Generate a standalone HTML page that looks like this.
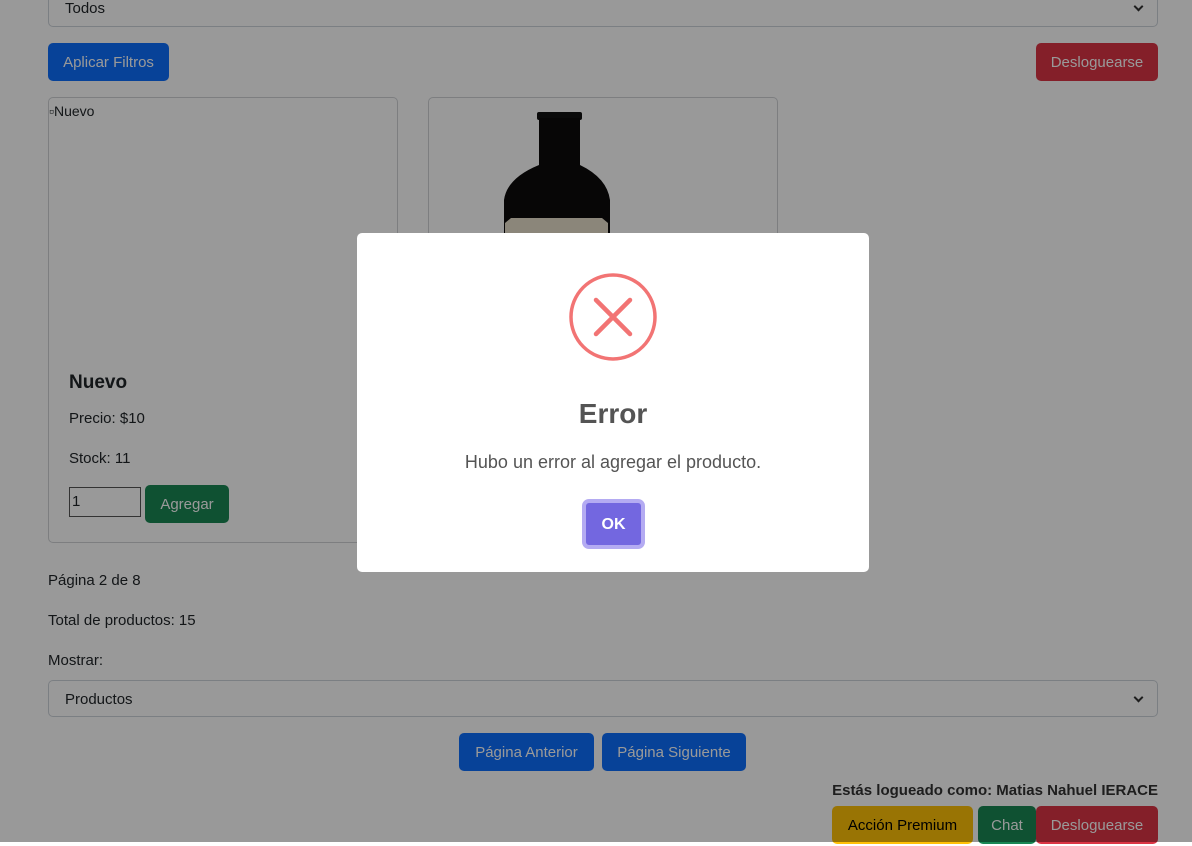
<!DOCTYPE html>
<html><head><meta charset="utf-8"><style>
*{box-sizing:border-box}
body{margin:0;width:1192px;height:842px;overflow:hidden;background:#fff;font-family:"Liberation Sans",sans-serif;font-size:15px;color:#212529;position:relative}
.sel{position:absolute;left:48px;width:1110px;height:38px;border:1px solid #ced4da;border-radius:5px;padding:10px 16px;font-size:15px;color:#212529}
.sel:after{content:"";position:absolute;right:15px;top:13px;width:5px;height:5px;border-right:2px solid #333;border-bottom:2px solid #333;transform:rotate(45deg)}
.btn{position:absolute;height:38px;border-radius:5px;color:#fff;font-size:15px;line-height:40px;text-align:center}
.blue{background:#0d6efd}.red{background:#dc3545}.green{background:#198754}.yellow{background:#ffc107;color:#000}
.card{position:absolute;top:97px;width:350px;height:446px;border:1px solid #d0d3d6;border-radius:5px}
.t{position:absolute}
.ov{position:absolute;inset:0;background:rgba(0,0,0,.4)}
.modal{position:absolute;left:357px;top:233px;width:512px;height:339px;background:#fff;border-radius:5px;text-align:center}
</style></head><body>
<div class="sel" style="top:-11px">Todos</div>
<div class="btn blue" style="left:48px;top:43px;width:121px">Aplicar Filtros</div>
<div class="btn red" style="left:1036px;top:43px;width:122px">Desloguearse</div>
<div class="card" style="left:48px">
 <div class="t" style="left:0;top:5px;font-size:14px">▫Nuevo</div>
 <div class="t" style="left:20px;top:274px;font-size:19px;font-weight:bold">Nuevo</div>
 <div class="t" style="left:20px;top:312px">Precio: $10</div>
 <div class="t" style="left:20px;top:352px">Stock: 11</div>
 <div class="t" style="left:20px;top:389px;width:72px;height:30px;border:1px solid #555;padding:5px 2px">1</div>
 <div class="btn green" style="left:96px;top:387px;width:84px">Agregar</div>
</div>
<div class="card" style="left:428px">
 <svg class="t" style="left:70px;top:12px" width="115" height="130" viewBox="0 0 115 130">
  <rect x="38" y="2" width="45" height="8" rx="2" fill="#111"/>
  <path d="M40 8 H81 V55 Q108 68 111 90 V130 H5 V90 Q8 68 40 55 Z" fill="#0c0a0a"/>
  <path d="M6 113 L12 108 H103 L109 113 V130 H6Z" fill="#e8e0cc"/>
 </svg>
</div>
<div class="t" style="left:48px;top:572px">Página 2 de 8</div>
<div class="t" style="left:48px;top:612px">Total de productos: 15</div>
<div class="t" style="left:48px;top:652px">Mostrar:</div>
<div class="sel" style="top:680px;height:37px">Productos</div>
<div class="btn blue" style="left:459px;top:733px;width:135px">Página Anterior</div>
<div class="btn blue" style="left:602px;top:733px;width:144px">Página Siguiente</div>
<div class="t" style="right:34px;top:782px;font-weight:bold;color:#333">Estás logueado como: Matias Nahuel IERACE</div>
<div class="btn yellow" style="left:832px;top:806px;width:141px">Acción Premium</div>
<div class="btn green" style="left:978px;top:806px;width:58px">Chat</div>
<div class="btn red" style="left:1036px;top:806px;width:122px">Desloguearse</div>
<div class="ov"></div>
<div class="modal">
 <svg class="t" style="left:212px;top:40px" width="88" height="88" viewBox="0 0 88 88">
  <circle cx="44" cy="44" r="42" fill="none" stroke="#f27474" stroke-width="3.5"/>
  <path d="M27 27 L61 61 M61 27 L27 61" stroke="#f27474" stroke-width="4.5" stroke-linecap="round"/>
 </svg>
 <div class="t" style="left:0;width:512px;top:165px;font-size:28px;font-weight:bold;color:#545454">Error</div>
 <div class="t" style="left:0;width:512px;top:219px;font-size:18px;color:#545454">Hubo un error al agregar el producto.</div>
 <div class="t" style="left:225px;top:266px;width:63px;height:50px;border:4px solid #b4abf2;border-radius:7px;background:#7367e0;color:#fff;font-weight:bold;font-size:16px;line-height:44px">OK</div>
</div>
</body></html>
